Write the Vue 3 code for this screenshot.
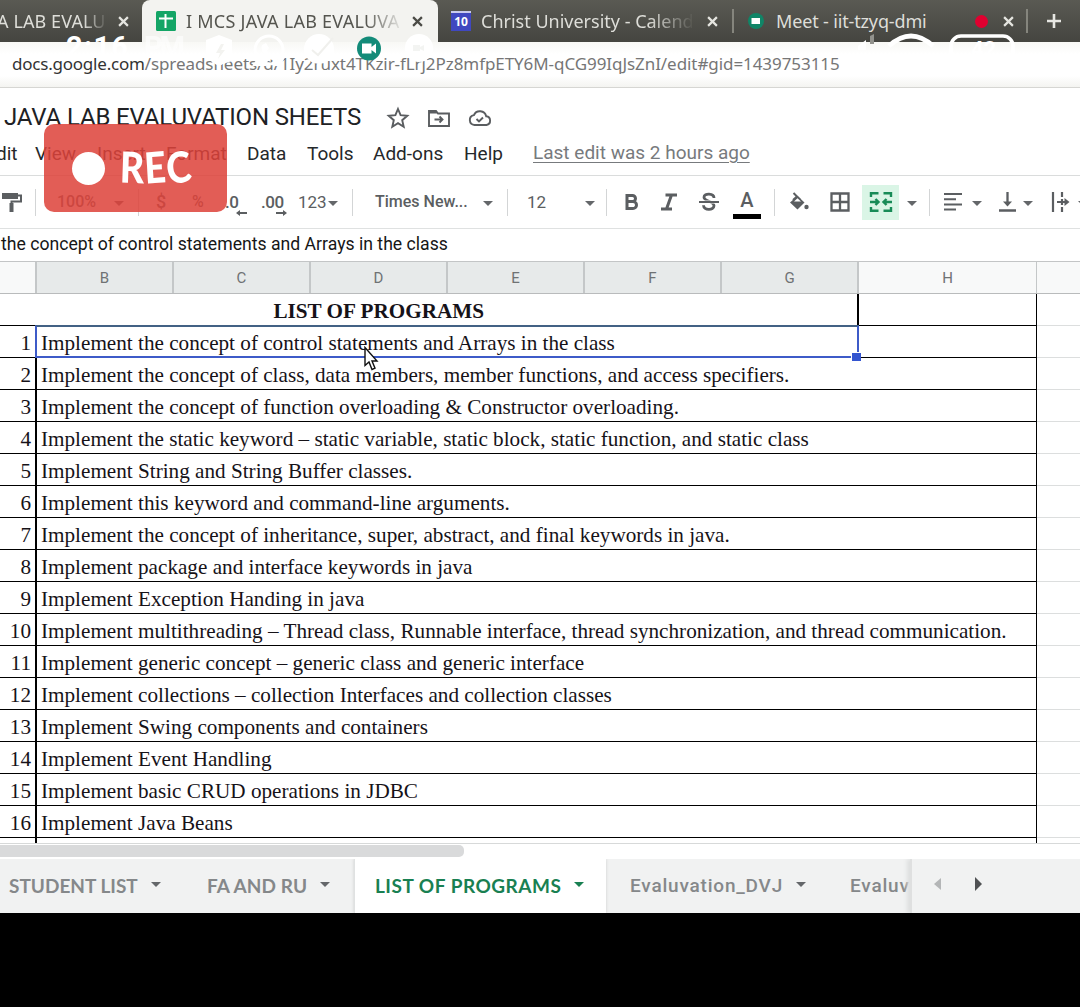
<script setup>
const menus = [
  ['dit', -4], ['View', 35], ['Insert', 97], ['Format', 166],
  ['Data', 247], ['Tools', 307], ['Add-ons', 373], ['Help', 464],
].map(([label, x], i, all) => ({ label, w: (all[i + 1] ? all[i + 1][1] : 533) - x }))

const columns = [
  { name: '', w: 37 }, { name: 'B', w: 137, on: true }, { name: 'C', w: 137, on: true },
  { name: 'D', w: 137, on: true }, { name: 'E', w: 137, on: true }, { name: 'F', w: 137, on: true },
  { name: 'G', w: 137, on: true }, { name: 'H', w: 178 }, { name: '', w: 50 },
]

const programs = [
  'Implement the concept of control statements and Arrays in the class',
  'Implement the concept of class, data members, member functions, and access specifiers.',
  'Implement the concept of function overloading & Constructor overloading.',
  'Implement the static keyword – static variable, static block, static function, and static class',
  'Implement String and String Buffer classes.',
  'Implement this keyword and command-line arguments.',
  'Implement the concept of inheritance, super, abstract, and final keywords in java.',
  'Implement package and interface keywords in java',
  'Implement Exception Handing in java',
  'Implement multithreading – Thread class, Runnable interface, thread synchronization, and thread communication.',
  'Implement generic concept – generic class and generic interface',
  'Implement collections – collection Interfaces and collection classes',
  'Implement Swing components and containers',
  'Implement Event Handling',
  'Implement basic CRUD operations in JDBC',
  'Implement Java Beans',
]
</script>

<template>
  <div class="screen">
    <header class="tabs">
      <div class="tab first"><span class="t fade">A LAB EVALU</span><svg class="x" viewBox="0 0 10 10"><path d="M1 1l8 8M9 1l-8 8" /></svg></div>
      <div class="tab active">
        <svg class="fav" viewBox="0 0 20 20"><rect width="20" height="20" rx="1.5" fill="#14a566" /><path d="M3 7.5h14M9.5 3v14" stroke="#fff" stroke-width="2" /></svg>
        <span class="t fade">I MCS JAVA LAB EVALUVA</span>
        <svg class="x" viewBox="0 0 10 10"><path d="M1 1l8 8M9 1l-8 8" /></svg>
      </div>
      <div class="tab cal">
        <span class="calicon">10</span>
        <span class="t fade">Christ University - Calend</span>
        <svg class="x" viewBox="0 0 10 10"><path d="M1 1l8 8M9 1l-8 8" /></svg>
      </div>
      <div class="tab meet">
        <svg class="fav" viewBox="0 0 20 20"><circle cx="10" cy="10" r="8" fill="#108567" /><path d="M5.500 7h8.500v6h-8.500z" fill="#fff" /></svg>
        <span class="t">Meet - iit-tzyq-dmi</span>
        <i class="dot"></i>
        <svg class="x" viewBox="0 0 10 10"><path d="M1 1l8 8M9 1l-8 8" /></svg>
      </div>
      <div class="plus"><svg width="16" height="16" viewBox="0 0 16 16"><path d="M8 1v14M1 8h14" stroke="#e6e6e2" stroke-width="2.6" /></svg></div>
    </header>

    <div class="url"><span class="host">docs.google.com</span><span class="path">/spreadsheets/d/1Iy2ruxt4TKzir-fLrj2Pz8mfpETY6M-qCG99IqJsZnI/edit#gid=1439753115</span></div>

    <div class="title">
      <span class="name">JAVA LAB EVALUVATION SHEETS</span>
      <svg class="ticon" viewBox="0 0 24 24"><path d="M12 3l2.6 6.2 6.7.6-5.1 4.4 1.5 6.5L12 17.2l-5.7 3.5 1.5-6.5-5.1-4.4 6.7-.6z" /></svg>
      <svg class="ticon" viewBox="0 0 24 24"><path d="M2 5h7l2 2.500h11V20H2zM2 6.500h8M7.500 13.500h8M12.500 10.500l3 3-3 3" /></svg>
      <svg class="ticon" viewBox="0 0 24 24"><path d="M6.500 19a5 5 0 0 1-.6-9.900 6.500 6.500 0 0 1 12.300 1.200A4.400 4.400 0 0 1 18.500 19zM8.500 13l2.500 2.500 4-4" /></svg>
    </div>

    <nav class="menu">
      <span v-for="m in menus" :key="m.label" :style="{ width: m.w + 'px' }">{{ m.label }}</span>
      <span class="last">Last edit was 2 hours ago</span>
    </nav>

    <div class="tools">
      <svg width="20" height="22" viewBox="0 0 20 22"><path d="M0 2h16v6H0z" fill="#5b5e61" /><path d="M16 4.500h3v6H9.500V13" fill="none" stroke="#5b5e61" stroke-width="2" /><path d="M7.500 12h4v9h-4z" fill="#5b5e61" /></svg>
      <i class="sep"></i>
      <b>100%</b><i class="car"></i><i class="sep"></i><b class="cur">$</b><b>%</b>
      <b class="dec">.0<svg width="11" height="6" viewBox="0 0 11 6"><path d="M0 3l4-3v2h7v2H4v2z" /></svg></b>
      <b class="dec">.00<svg width="11" height="6" viewBox="0 0 11 6"><path d="M11 3L7 0v2H0v2h7v2z" /></svg></b>
      <b class="num">123</b><i class="car"></i><i class="sep"></i>
      <b>Times New...</b><i class="car"></i><i class="sep"></i>
      <b class="num">12</b><i class="car"></i><i class="sep"></i>
      <svg width="16" height="18" viewBox="0 0 16 18"><path d="M3 2.500h5.500a3 3 0 0 1 0 6H3zm0 6h6a3.500 3.500 0 0 1 0 7H3z" fill="none" stroke="#5b5e61" stroke-width="3" /></svg>
      <svg width="18" height="18" viewBox="0 0 18 18"><path d="M5.500 2H17M1 16h11M11.500 2L6.500 16" fill="none" stroke="#5b5e61" stroke-width="3" /></svg>
      <svg width="20" height="20" viewBox="0 0 20 20"><path d="M15 6c0-5-10-5-10-.8C5 9.500 15 9 15 13.800c0 4.900-10.500 4.700-10.500-.5" fill="none" stroke="#5b5e61" stroke-width="2.800" /><path d="M0 8.500h20v3H0z" fill="#fff" /><path d="M0 9h20v2H0z" fill="#5b5e61" /></svg>
      <div class="color">A</div>
      <i class="sep"></i>
      <svg width="20" height="20" viewBox="0 0 20 20"><path d="M1 10.500L8.500 4l7 6.500-7 7z" fill="#5b5e61" /><path d="M4.500 1l7 7M8.500 4L4 8" stroke="#5b5e61" stroke-width="2" /><path d="M5 9.500l3.500-3.300L12 9.500z" fill="#fff" /><circle cx="17.500" cy="15" r="2.200" fill="#5b5e61" /></svg>
      <svg width="20" height="20" viewBox="0 0 20 20"><path d="M1.500 1.500h17v17h-17zM10 1v18M1 10h18" fill="none" stroke="#5b5e61" stroke-width="2.300" /></svg>
      <div class="merge"><svg width="24" height="22" viewBox="0 0 24 22"><path d="M2 6V2.200h7.500M14.500 2.200H22V6M2 16v3.800h7.500M14.500 19.800H22V16M1 11h8M23 11h-8M6.500 8l3 3-3 3M17.500 8l-3 3 3 3" fill="none" stroke="#188b57" stroke-width="2.400" /></svg></div>
      <i class="car"></i><i class="sep"></i>
      <svg width="20" height="20" viewBox="0 0 20 20"><path d="M1 2h18M1 7.200h12M1 12.400h18M1 17.600h12" stroke="#5b5e61" stroke-width="2" /></svg>
      <i class="car"></i>
      <svg width="17" height="20" viewBox="0 0 17 20"><path d="M8.500 0v11M0 18.500h17" stroke="#5b5e61" stroke-width="2.300" /><path d="M4 9.500h9l-4.500 5z" fill="#5b5e61" /></svg>
      <i class="car"></i>
      <svg width="20" height="20" viewBox="0 0 20 20"><path d="M2 0v20M11 0v5M11 15v5M6 10h9M11 7v6" stroke="#5b5e61" stroke-width="2.200" /><path d="M13.500 6l5 4-5 4z" fill="#5b5e61" /></svg>
      <i class="car"></i>
    </div>

    <div class="formula">the concept of control statements and Arrays in the class</div>

    <div class="cols">
      <div v-for="(c, i) in columns" :key="i" :class="{ on: c.on, thin: c.name === 'H' }" :style="{ width: c.w + 'px' }">{{ c.name }}</div>
    </div>

    <main class="grid">
      <div class="row head"><span class="heading">LIST OF PROGRAMS</span><span class="hcell"></span><span class="rest"></span></div>
      <div v-for="(p, i) in programs" :key="i" class="row">
        <span class="n">{{ i + 1 }}</span><span class="p">{{ p }}</span><span class="rest"></span>
      </div>
      <div class="row tail"><span class="n"></span><span class="p"></span><span class="rest"></span></div>
      <div class="selection"><i></i></div>
    </main>

    <div class="scroll"><i></i></div>

    <footer class="sheets">
      <div class="s s1"><span>STUDENT LIST</span><i class="car"></i></div>
      <div class="s s2"><span>FA AND RU</span><i class="car"></i></div>
      <div class="s s3"><span>LIST OF PROGRAMS</span><i class="car"></i></div>
      <div class="s s4"><span>Evaluvation_DVJ</span><i class="car"></i></div>
      <div class="s s5"><span>Evaluv</span></div>
      <div class="arrows"><svg width="9" height="14" viewBox="0 0 9 14"><path d="M8 1v12L1 7z" fill="#b4b6b7" /></svg><svg width="9" height="14" viewBox="0 0 9 14"><path d="M1 0v14l7-7z" fill="#505254" /></svg></div>
    </footer>

    <svg class="status" width="1080" height="80" viewBox="0 0 1080 80">
      <defs><clipPath id="bar"><rect width="1080" height="66" /></clipPath></defs>
      <g clip-path="url(#bar)" fill="#fff">
        <text x="66" y="57" class="clock" textLength="62">2:16</text>
        <text x="144" y="57" class="clock faint" textLength="41">PM</text>
        <path d="M206 40l13-5 13 5v10c0 8-6 13-13 16-7-3-13-8-13-16z" />
        <circle cx="269" cy="50" r="14" fill="none" stroke="#fff" stroke-width="3" />
        <path d="M262 45l4-2 3 5-2 3 5 5 3-2 4 4c-7 7-20-5-17-13z" />
        <circle cx="319" cy="49" r="15" />
        <path d="M216 57l12-4 4 8-12 4zM252 66l7-10 10 2-3 8zM273 66l8-12 6 0-8 14zM320 58l10-3-5 10z" />
        <circle cx="419" cy="48" r="14" />
        <path d="M221 44l-5 9h4l-2 6 7-9h-4l3-6z" fill="#f3f3f0" />
        <path d="M312 50l6 5 15-17" fill="none" stroke="#f0f0ed" stroke-width="2" />
        <path d="M858 46l8-6v10h-8z" /><path d="M870 36l4-2v10h-4z" fill="#92928d" />
        <path d="M889 46q22-20 44 0" fill="none" stroke="#fff" stroke-width="5" />
        <rect x="951" y="36" width="62" height="30" rx="10" fill="none" stroke="#fff" stroke-width="3.500" />
        <text x="971" y="57" class="batt">42</text>
      </g>
      <path d="M413 45h7v2l4-2v6l-4-2v2h-7z" fill="#f3f4f2" />
      <circle cx="369" cy="48.500" r="12" fill="#138b79" />
      <path d="M362 43.500h9.500v3.500l4.500-3.500v10l-4.500-3.500v3.500H362z" fill="#fff" />
    </svg>

    <div class="rec"><i></i><span class="word"><span>R</span><span>E</span><span>C</span></span></div>
    <svg class="pointer" width="16" height="26" viewBox="0 0 16 26"><path d="M2 1.500v18l4-3.500 3 7.500 3-1.300-3-7.200h5z" fill="#fff" stroke="#111" stroke-width="1.400" /></svg>
  </div>
</template>

<style>
body { background: #000; overflow: hidden; }
</style>

<style scoped>
.screen { position: relative; width: 1080px; height: 1007px; overflow: hidden; background: #000; font-family: Roboto, sans-serif; white-space: nowrap; }
.screen * { box-sizing: border-box; }
.tabs { display: flex; height: 42px; background: linear-gradient(#5a5a53, #454540); font-family: "Noto Sans", sans-serif; font-size: 18px; color: #deded9; }
.tab { display: flex; align-items: center; height: 42px; flex: none; overflow: hidden; }
.tab .t { flex: none; line-height: 40px; }
.fade { -webkit-mask-image: linear-gradient(90deg, #000 78%, transparent 100%); }
.x { width: 11px; height: 11px; flex: none; fill: none; stroke: #e5e5e0; stroke-width: 2; }
.first { width: 142px; }
.first .t { margin-left: -3px; width: 111px; letter-spacing: .1px; }
.first .x { margin-left: 10px; }
.active { width: 296px; background: #f3f3f0; color: #55554f; border-radius: 8px 8px 0 0; }
.active .x { stroke: #4b4b46; margin-left: 12px; }
.active .fav { margin-left: 14px; }
.active .t { margin-left: 10px; width: 214px; letter-spacing: .25px; -webkit-mask-image: linear-gradient(90deg, #000 84%, transparent 102%); }
.fav { width: 20px; height: 20px; flex: none; }
.cal { width: 295px; }
.calicon { width: 20px; height: 20px; margin-left: 13px; flex: none; background: #4048c0; border-top: 2px solid #c9cbee; color: #fff; font: bold 12px/18px "Noto Sans", sans-serif; text-align: center; }
.cal .t { margin-left: 10px; width: 214px; }
.cal .x { margin-left: 12px; }
.meet { width: 295px; margin-left: -1px; }
.meet::before, .plus::before { content: ""; width: 2px; height: 24px; background: #85857d; flex: none; margin-left: -2px; }
.meet::before { margin-left: 0; margin-right: -2px; }
.meet .fav { margin-left: 14px; }
.meet .t { margin-left: 10px; width: 151px; letter-spacing: -.15px; }
.dot { width: 13px; height: 13px; border-radius: 50%; background: #e00030; margin-left: 48px; }
.meet .x { margin-left: 15px; }
.plus { display: flex; align-items: center; height: 42px; margin-left: 1px; }
.plus svg { margin-left: 18px; }
.url { height: 46px; background: linear-gradient(#f8f8f5 0, #fff 12px, #fff 34px, #f4f4f1 45px); border-bottom: 1px solid #d6d6d3; padding-left: 12px; line-height: 43px; font-family: "Noto Sans", sans-serif; font-size: 17px; color: #767676; }
.host { color: #333; letter-spacing: -.22px; }
.path { letter-spacing: -.07px; }
.title { display: flex; align-items: center; height: 47px; background: #fff; padding: 12px 0 0 4px; }
.name { width: 382px; font-size: 24px; line-height: 34px; color: #202124; letter-spacing: -.15px; margin-top: -2px; }
.ticon { width: 24px; height: 24px; margin-right: 17px; flex: none; fill: none; stroke: #5a5d60; stroke-width: 1.900; }
.menu { display: flex; height: 41px; background: #fff; border-bottom: 1px solid #dadcdc; font-size: 19px; line-height: 38px; color: #25282b; }
.menu span { flex: none; }
.menu span:first-child { margin-left: -4px; }
.menu .last { color: #777a7d; text-decoration: underline; text-underline-offset: 3px; line-height: 36px; }
.tools { display: grid; align-items: center; height: 53px; background: #fff; border-bottom: 1px solid #dfe1e1; padding-left: 2px;
  grid-template-columns: 33px 22px 57px 24px 18px 36px 33px 36px 37px 30px 24px 23px 108px 24px 20px 58px 21px 18px 36px 39px 34px 41px 15px 41px 32px 45px 22px 14px 29px 27px 24px 28px 27px 10px; }
.tools b { font-weight: 500; font-size: 16px; color: #5b5e61; margin-top: -1px; }
.tools .num { font-weight: 400; font-size: 17px; }
.tools .cur { font-size: 18px; }
.tools .dec { position: relative; font-size: 17px; letter-spacing: -.5px; }
.dec svg { position: absolute; left: 11px; top: 18px; fill: #5b5e61; }
.dec + .dec svg { left: 15px; }
.car { border: 5px solid transparent; border-top-color: #64676a; border-bottom: 0; width: 0; height: 0; }
.tools .car { margin-top: 3px; }
.sep { width: 1px; height: 27px; background: #d3d5d6; }
.color { width: 28px; height: 34px; padding-top: 3px; text-align: center; font: 500 20px/24px Roboto, sans-serif; color: #5b5e61; border-bottom: 5px solid #000; }
.merge { width: 37px; height: 35px; display: flex; align-items: center; justify-content: center; background: #daf5e6; }
.formula { height: 32px; background: #fff; padding-left: 1px; font-size: 17.640px; line-height: 31px; color: #161616; }
.cols { display: flex; height: 33px; border-top: 1px solid #c3c5c6; border-bottom: 1px solid #b9bbbc; background: #f8f9f9; font-size: 15px; line-height: 33px; color: #6f7274; text-align: center; overflow: hidden; }
.cols div { flex: none; border-right: 2px solid #c4c7c8; }
.cols .on { background: #e7eaea; }
.cols .thin { border-right-width: 1px; }
.grid { position: relative; height: 549px; overflow: hidden; background: #fff; font-family: "Liberation Serif", serif; font-size: 21.180px; color: #161218; }
.row { display: flex; height: 32.030px; line-height: 34px; }
.row.head { height: 32px; }
.heading { width: 859px; padding-right: 373px; border-right: 2px solid #000; border-bottom: 1px solid #000; font-weight: bold; text-align: right; }
.hcell { width: 178px; border-right: 1px solid #000; border-bottom: 1px solid #000; }
.n { width: 37px; border-right: 2px solid #000; border-bottom: 1px solid #000; text-align: right; padding-right: 4px; }
.p { width: 1000px; border-right: 1px solid #000; border-bottom: 1px solid #000; padding-left: 4px; }
.rest { flex: 1; border-bottom: 1px solid #dcdede; }
.row > span { flex-shrink: 0; }
.selection { position: absolute; left: 35px; top: 31px; width: 824px; height: 33px; border: 2px solid #3d5bc8; border-top-color: #436184; }
.selection i { position: absolute; right: -4px; bottom: -5px; width: 10px; height: 9px; background: #3455d0; border: 1px solid #fff; border-width: 1px 0 0 1px; }
.scroll { height: 16px; background: #fff; border-top: 1px solid #d7d9d9; padding-top: 1px; }
.scroll i { display: block; width: 464px; height: 12px; background: #d9dadb; border-radius: 0 5px 5px 0; }
.sheets { display: flex; height: 54px; background: #f1f2f2; font-family: Lato, sans-serif; font-weight: 700; font-size: 19px; color: #85888a; overflow: hidden; }
.s { display: flex; align-items: center; flex: none; overflow: hidden; padding-bottom: 2px; }
.s .car { flex: none; margin-top: -1px; }
.s1 { width: 183px; padding-left: 9px; } .s1 span { width: 142px; }
.s2 { width: 171px; padding-left: 24px; letter-spacing: .1px; } .s2 span { width: 113px; }
.s3 { width: 252px; padding-left: 20px; background: #fff; color: #198052; border-left: 1px solid #e0e2e2; box-shadow: 0 0 3px #ccc; letter-spacing: .5px; } .s3 span { width: 199px; } .s3 .car { border-top-color: #198052; }
.s4 { width: 221px; padding-left: 24px; } .s4 span { width: 166px; }
.s4, .s5 { font-family: Roboto, sans-serif; font-weight: 500; font-size: 19px; letter-spacing: .8px; }
.s5 { width: 83px; padding-left: 23px; }
.arrows { display: flex; align-items: center; gap: 32px; flex: 1; border-left: 2px solid #dfe0e0; padding: 0 0 5px 21px; box-shadow: -3px 0 4px #dddfdf; }
.status { position: absolute; left: 0; top: 0; }
.clock { font: bold 29px Roboto, sans-serif; }
.faint { opacity: .6; }
.batt { font: bold 22px Roboto, sans-serif; }
.rec { position: absolute; left: 44px; top: 124px; width: 183px; height: 88px; border-radius: 10px; background: rgba(221, 66, 58, .86); display: flex; align-items: center; color: #fff; }
.rec i { width: 33px; height: 33px; border-radius: 50%; background: #fff; margin-left: 28px; }
.word { display: flex; margin-left: 15px; margin-top: -2px; font: 900 43px/50px Lato, sans-serif; transform: scaleX(.87); transform-origin: 0 50%; }
.word span:nth-child(1) { transform: rotate(2deg); }
.word span:nth-child(2) { transform: rotate(-4deg); }
.word span:nth-child(3) { transform: rotate(-8deg); }
.pointer { position: absolute; left: 363px; top: 346px; }
</style>
